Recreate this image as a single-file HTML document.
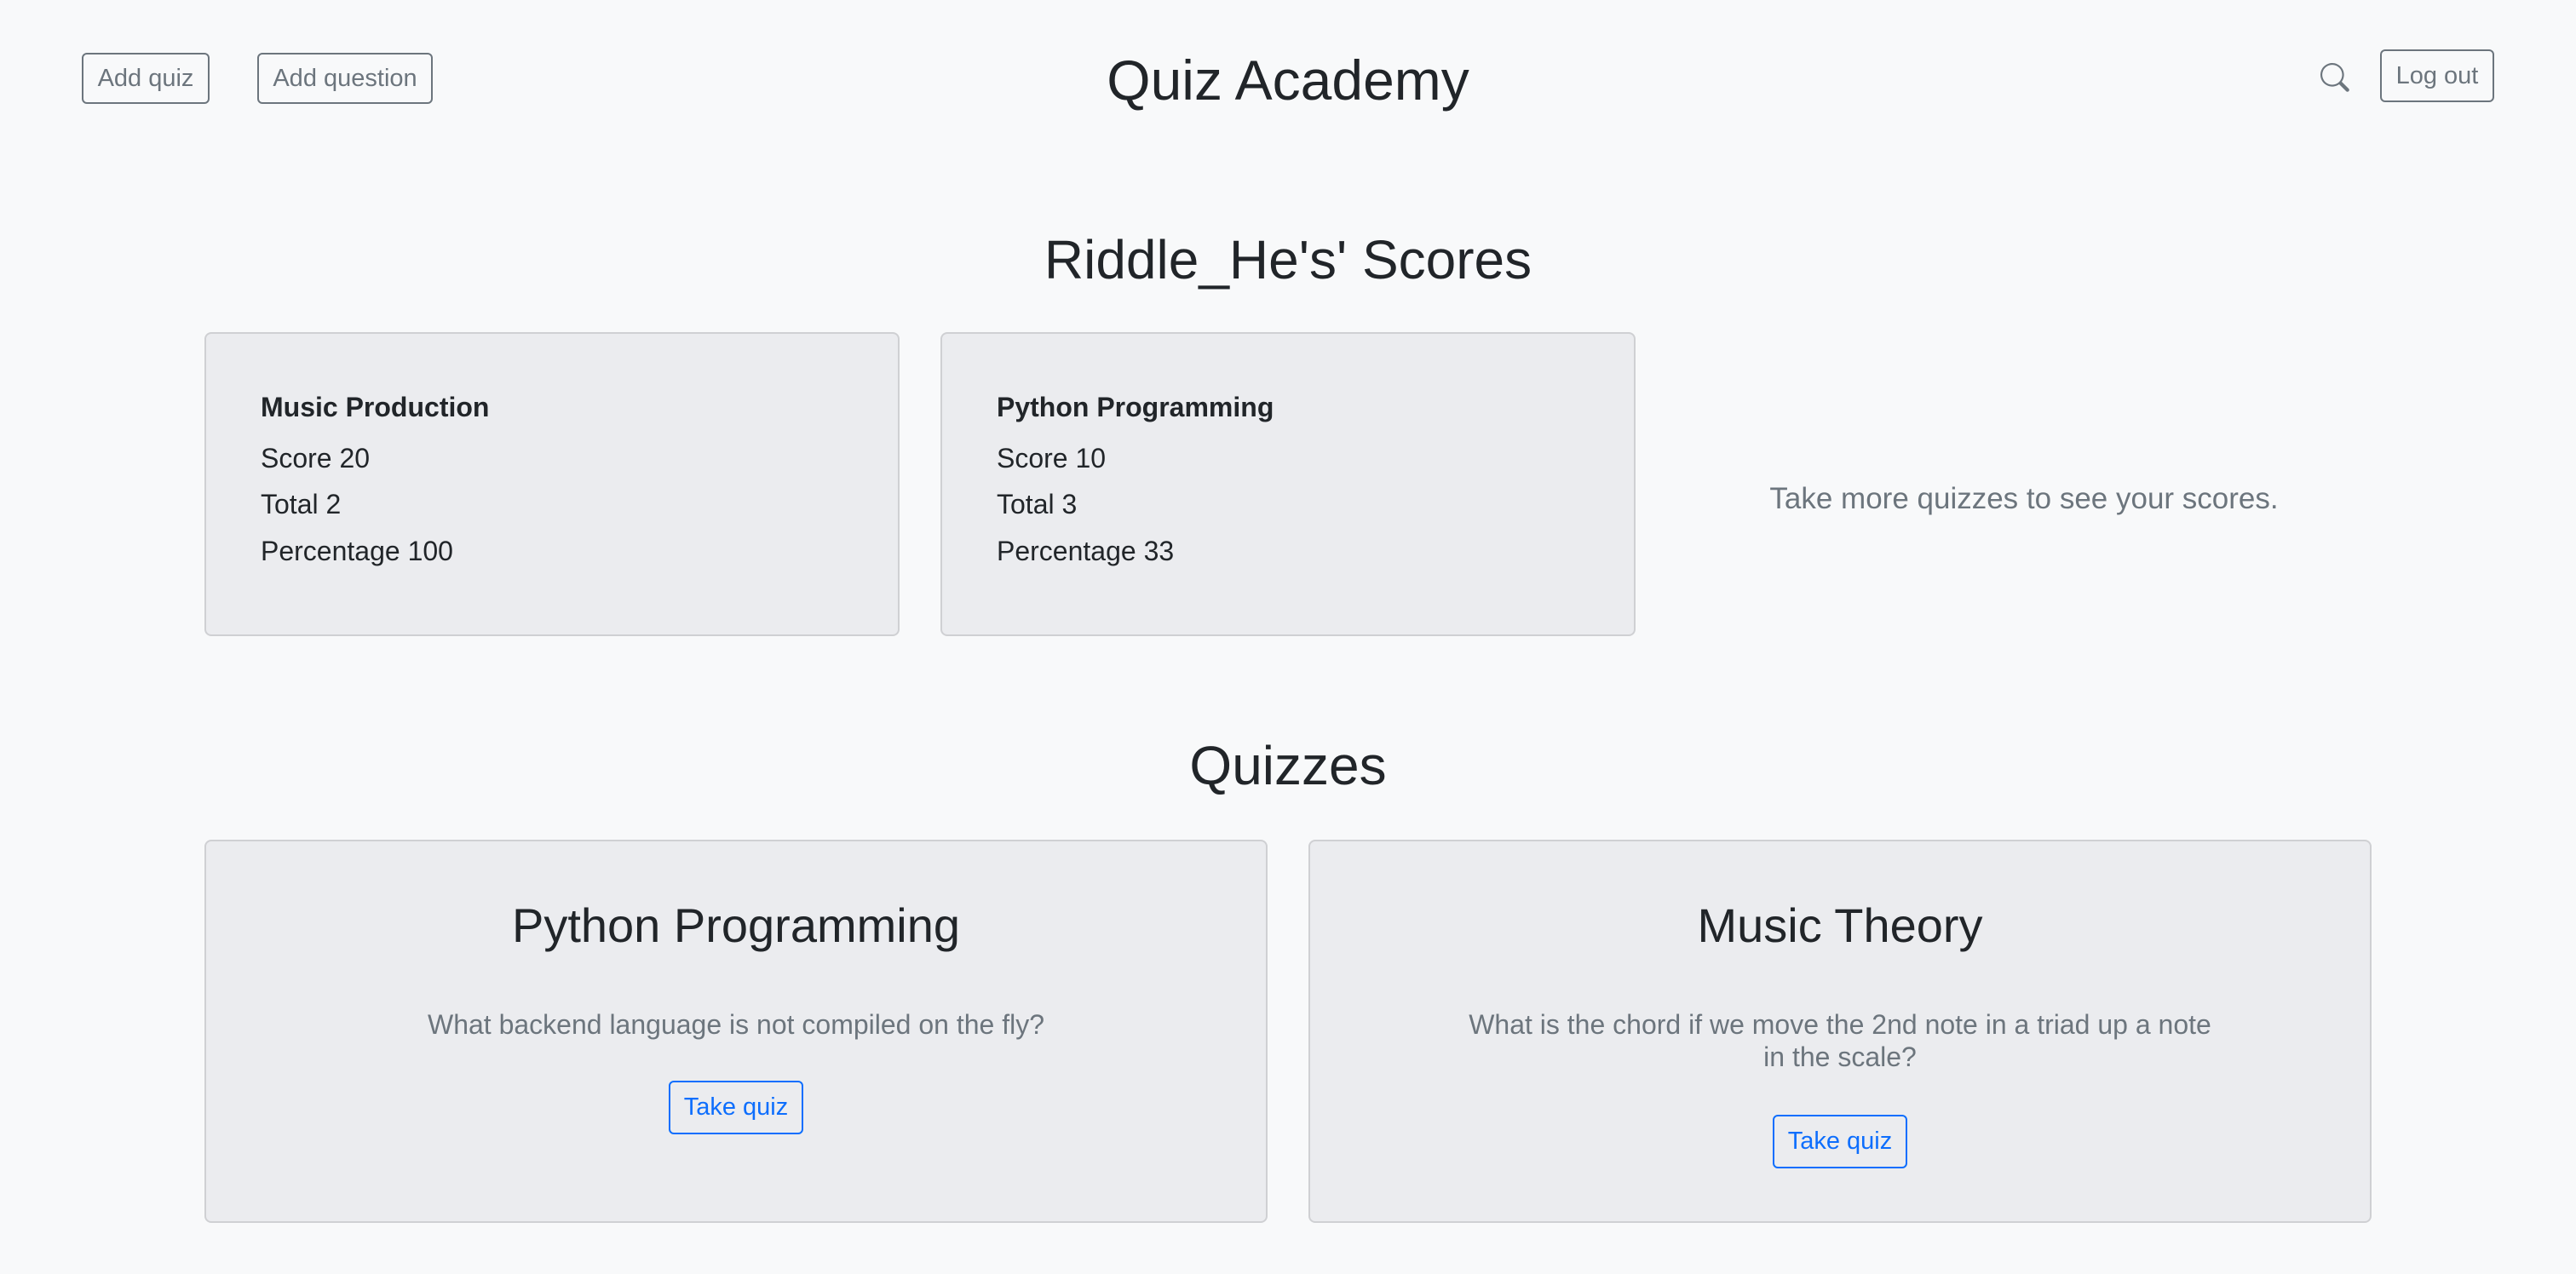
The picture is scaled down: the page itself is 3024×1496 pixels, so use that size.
<!DOCTYPE html>
<html><head><meta charset="utf-8"><style>
*{box-sizing:border-box;margin:0;padding:0}
body{width:3024px;height:1496px;background:#f8f9fa;font-family:"Liberation Sans",Arial,sans-serif;color:#212529;position:relative;overflow:hidden}
.a{position:absolute}
.btn{position:absolute;border:2px solid #6c757d;border-radius:6px;color:#6c757d;font-size:29px;display:flex;align-items:center;justify-content:center}
.bq{position:absolute;border:2px solid #0d6efd;border-radius:6px;color:#0d6efd;font-size:29px;display:flex;align-items:center;justify-content:center;width:158px;height:63px}
.card{position:absolute;background:#ebecef;border:2px solid #cfd0d3;border-radius:8px}
.c{text-align:center}
.st{position:absolute;left:64px;font-size:32px}
</style></head><body>
<div class="btn" style="left:96px;top:62px;width:150px;height:60px">Add quiz</div>
<div class="btn" style="left:302px;top:62px;width:206px;height:60px">Add question</div>
<div class="a c" style="left:0;width:3024px;top:52px;font-size:66px;font-weight:300;line-height:84px">Quiz Academy</div>
<svg class="a" style="left:2724px;top:74px" width="34" height="34" viewBox="0 0 16 16" fill="#6c757d"><path d="M11.742 10.344a6.5 6.5 0 1 0-1.397 1.398l3.850 3.850a1 1 0 0 0 1.415-1.414l-3.850-3.850zM12 6.5a5.5 5.5 0 1 1-11 0 5.5 5.5 0 0 1 11 0z"/></svg>
<div class="btn" style="left:2794px;top:58px;width:134px;height:62px">Log out</div>
<div class="a c" style="left:0;width:3024px;top:265px;font-size:64px;font-weight:500;line-height:80px">Riddle_He's' Scores</div>
<div class="card" style="left:240px;top:390px;width:816px;height:357px">
<div class="st" style="top:68px;font-weight:bold">Music Production</div>
<div class="st" style="top:128px">Score 20</div>
<div class="st" style="top:182px">Total 2</div>
<div class="st" style="top:237px">Percentage 100</div>
</div>
<div class="card" style="left:1104px;top:390px;width:816px;height:357px">
<div class="st" style="top:68px;font-weight:bold">Python Programming</div>
<div class="st" style="top:128px">Score 10</div>
<div class="st" style="top:182px">Total 3</div>
<div class="st" style="top:237px">Percentage 33</div>
</div>
<div class="a c" style="left:1920px;width:912px;top:566px;font-size:35px;color:#6c757d">Take more quizzes to see your scores.</div>
<div class="a c" style="left:0;width:3024px;top:859px;font-size:64px;font-weight:500;line-height:80px">Quizzes</div>
<div class="card" style="left:240px;top:986px;width:1248px;height:450px">
<div class="a c" style="left:0;width:1244px;top:66px;font-size:56px;font-weight:500">Python Programming</div>
<div class="a c" style="left:0;width:1244px;top:196px;font-size:32px;color:#6c757d;line-height:38px">What backend language is not compiled on the fly?</div>
<div class="bq" style="left:543px;top:281px">Take quiz</div>
</div>
<div class="card" style="left:1536px;top:986px;width:1248px;height:450px">
<div class="a c" style="left:0;width:1244px;top:66px;font-size:56px;font-weight:500">Music Theory</div>
<div class="a c" style="left:182px;width:880px;top:196px;font-size:32px;color:#6c757d;line-height:38px">What is the chord if we move the 2nd note in a triad up a note<br>in the scale?</div>
<div class="bq" style="left:543px;top:321px">Take quiz</div>
</div>
</body></html>
